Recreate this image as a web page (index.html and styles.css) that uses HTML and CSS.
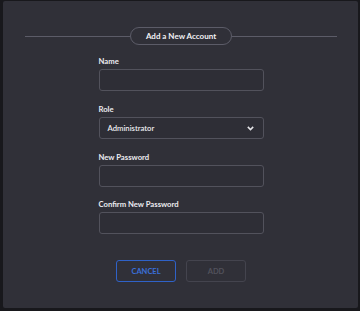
FILE: index.html
```html
<!DOCTYPE html>
<html>
<head>
<meta charset="utf-8">
<link rel="stylesheet" href="styles.css">
</head>
<body>
<div class="panel">
  <div class="header">
    <span class="rule"></span>
    <span class="pill">Add a New Account</span>
    <span class="rule"></span>
  </div>
  <form class="form">
    <div class="field">
      <label class="label">Name</label>
      <div class="input"></div>
    </div>
    <div class="field">
      <label class="label">Role</label>
      <div class="input select">
        <span>Administrator</span>
        <svg class="chev" width="7" height="5" viewBox="0 0 7 5"><path d="M0.8 0.9 L3.5 3.6 L6.2 0.9" fill="none" stroke="#e6e6ea" stroke-width="1.5"/></svg>
      </div>
    </div>
    <div class="field">
      <label class="label">New Password</label>
      <div class="input"></div>
    </div>
    <div class="field last">
      <label class="label">Confirm New Password</label>
      <div class="input"></div>
    </div>
    <div class="buttons">
      <div class="btn cancel">CANCEL</div>
      <div class="btn add">ADD</div>
    </div>
  </form>
</div>
</body>
</html>
```

FILE: styles.css
```css
html, body {
  margin: 0;
  padding: 0;
  background: #18181c;
  width: 360px;
  height: 311px;
  overflow: hidden;
  font-family: Lato, "Open Sans", sans-serif;
}
.panel {
  margin: 1px 2px 0 3px;
  height: 307px;
  background: #303038;
  box-sizing: border-box;
  padding: 26px 21px 0 22px;
  border-radius: 2px;
}
.header {
  display: flex;
  align-items: center;
  height: 18px;
}
.rule {
  flex: 1;
  height: 1px;
  background: #5c5c68;
}
.pill {
  box-sizing: border-box;
  width: 102px;
  height: 18px;
  border: 1px solid #5c5c68;
  border-radius: 9px;
  display: flex;
  align-items: center;
  justify-content: center;
  color: #f2f2f5;
  font-size: 8px;
  font-weight: 700;
}
.form {
  width: 165px;
  margin: 11px auto 0;
  display: flex;
  flex-direction: column;
  gap: 13px;
}
.field {
  display: flex;
  flex-direction: column;
  gap: 3px;
}
.field.last {
  margin-top: -1px;
}
.label {
  font-size: 7.7px;
  line-height: 10px;
  font-weight: 700;
  color: #ececf0;
}
.input {
  box-sizing: border-box;
  height: 22px;
  border: 1px solid #52525c;
  border-radius: 3px;
  background: #2e2e36;
}
.select {
  display: flex;
  align-items: center;
  justify-content: space-between;
  padding: 0 9px 0 8px;
  color: #ececf0;
  font-size: 7.7px;
  font-weight: 600;
}
.buttons {
  display: flex;
  justify-content: center;
  gap: 10px;
  margin-top: 13px;
}
.btn {
  box-sizing: border-box;
  width: 60px;
  height: 22px;
  border-radius: 3px;
  display: flex;
  align-items: center;
  justify-content: center;
  font-size: 7.5px;
  font-weight: 700;
}
.cancel {
  border: 1px solid #2f62c8;
  color: #3a6fd8;
}
.add {
  border: 1px solid #44444e;
  color: #52525c;
}
```
